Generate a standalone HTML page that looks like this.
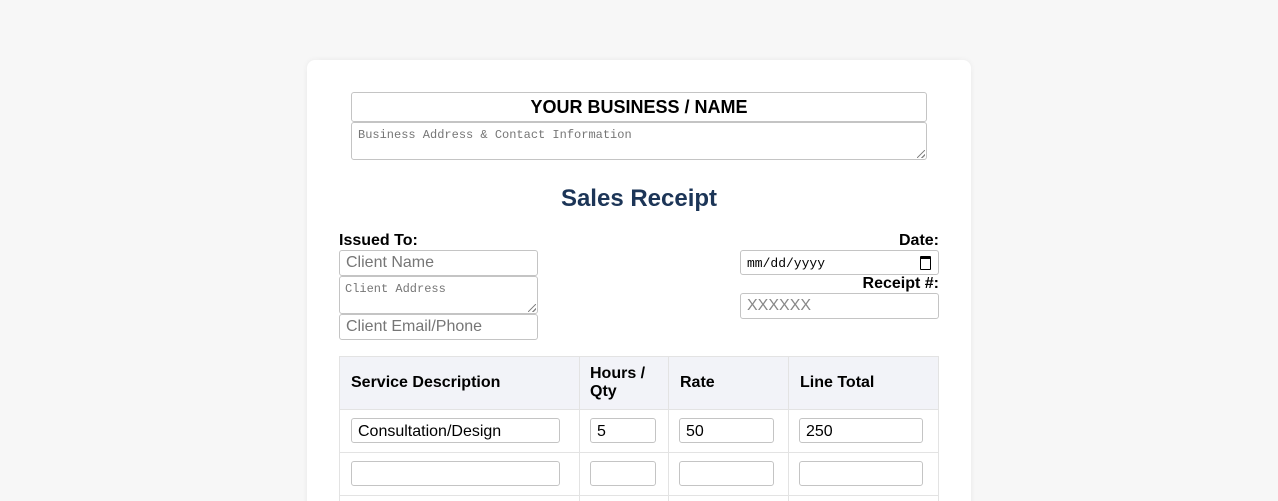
<!DOCTYPE html><html><head><style>
html,body{margin:0;height:501px;overflow:hidden}
body{background:#f7f7f7;font-family:"Liberation Sans",Arial,sans-serif;width:1278px;position:relative}
.card{position:absolute;left:307px;top:60px;width:664px;height:460px;background:#fff;border-radius:8px;box-shadow:0 0 6px rgba(0,0,0,.06)}
.a{position:absolute;box-sizing:border-box}
.in{border:1px solid #c4c4c4;border-radius:3px;background:#fff}
.ph{color:#767676;font-size:16px;padding:3px 0 0 6px}
.mono{font-family:"Liberation Mono",monospace;font-size:12px;color:#767676;padding:5px 0 0 6px}
.lb{font-weight:bold;font-size:16px;color:#000}
.td{font-size:16px;color:#000;padding:4px 0 0 6px}
.hd{font-weight:bold;font-size:16px;color:#000}
.grip{position:absolute;right:1px;bottom:1px;width:8px;height:8px;background:linear-gradient(135deg,transparent 45%,#888 45%,#888 55%,transparent 55%,transparent 75%,#888 75%,#888 85%,transparent 85%)}
</style></head><body>
<div class="card"></div>
<div class="a in" style="left:351px;top:92px;width:576px;height:30px;text-align:center;font-weight:bold;font-size:18px;padding-top:4px">YOUR BUSINESS / NAME</div>
<div class="a in mono" style="left:351px;top:122px;width:576px;height:38px">Business Address &amp; Contact Information<div class="grip"></div></div>
<div class="a" style="left:307px;width:664px;top:185px;text-align:center;font-weight:bold;font-size:24px;color:#1c3557">Sales Receipt</div>
<div class="a lb" style="left:339px;top:232px">Issued To:</div>
<div class="a in ph" style="left:339px;top:250px;width:199px;height:26px">Client Name</div>
<div class="a in mono" style="left:339px;top:276px;width:199px;height:38px;padding-left:5px">Client Address<div class="grip"></div></div>
<div class="a in ph" style="left:339px;top:314px;width:199px;height:26px">Client Email/Phone</div>
<div class="a lb" style="right:339px;top:232px">Date:</div>
<div class="a in" style="left:740px;top:250px;width:199px;height:25px;font-family:'Liberation Mono',monospace;font-size:13px;padding:5px 0 0 6px">mm/dd/yyyy<span style="position:absolute;right:7px;top:5px;width:9px;height:10px;border:1.5px solid #000;border-top-width:3px;border-radius:1px"></span></div>
<div class="a lb" style="right:339px;top:275px">Receipt #:</div>
<div class="a in ph" style="left:740px;top:293px;width:199px;height:26px;color:#888">XXXXXX</div>
<div class="a" style="left:339px;top:356px;width:600px;height:160px;border:1px solid #e3e3e3;border-bottom:none"></div>
<div class="a" style="left:340px;top:357px;width:598px;height:52px;background:#f2f3f8"></div>
<div class="a" style="left:339px;top:409px;width:600px;height:1px;background:#e3e3e3"></div>
<div class="a" style="left:339px;top:452px;width:600px;height:1px;background:#e3e3e3"></div>
<div class="a" style="left:339px;top:495px;width:600px;height:1px;background:#e3e3e3"></div>
<div class="a" style="left:579px;top:356px;width:1px;height:160px;background:#e3e3e3"></div>
<div class="a" style="left:668px;top:356px;width:1px;height:160px;background:#e3e3e3"></div>
<div class="a" style="left:788px;top:356px;width:1px;height:160px;background:#e3e3e3"></div>
<div class="a hd" style="left:351px;top:374px">Service Description</div>
<div class="a hd" style="left:590px;top:365px;line-height:18px">Hours /<br>Qty</div>
<div class="a hd" style="left:680px;top:374px">Rate</div>
<div class="a hd" style="left:800px;top:374px">Line Total</div>
<div class="a in td" style="left:351px;top:418px;width:209px;height:25px">Consultation/Design</div>
<div class="a in td" style="left:590px;top:418px;width:66px;height:25px">5</div>
<div class="a in td" style="left:679px;top:418px;width:95px;height:25px">50</div>
<div class="a in td" style="left:799px;top:418px;width:124px;height:25px">250</div>
<div class="a in" style="left:351px;top:461px;width:209px;height:25px"></div>
<div class="a in" style="left:590px;top:461px;width:66px;height:25px"></div>
<div class="a in" style="left:679px;top:461px;width:95px;height:25px"></div>
<div class="a in" style="left:799px;top:461px;width:124px;height:25px"></div>
</body></html>
